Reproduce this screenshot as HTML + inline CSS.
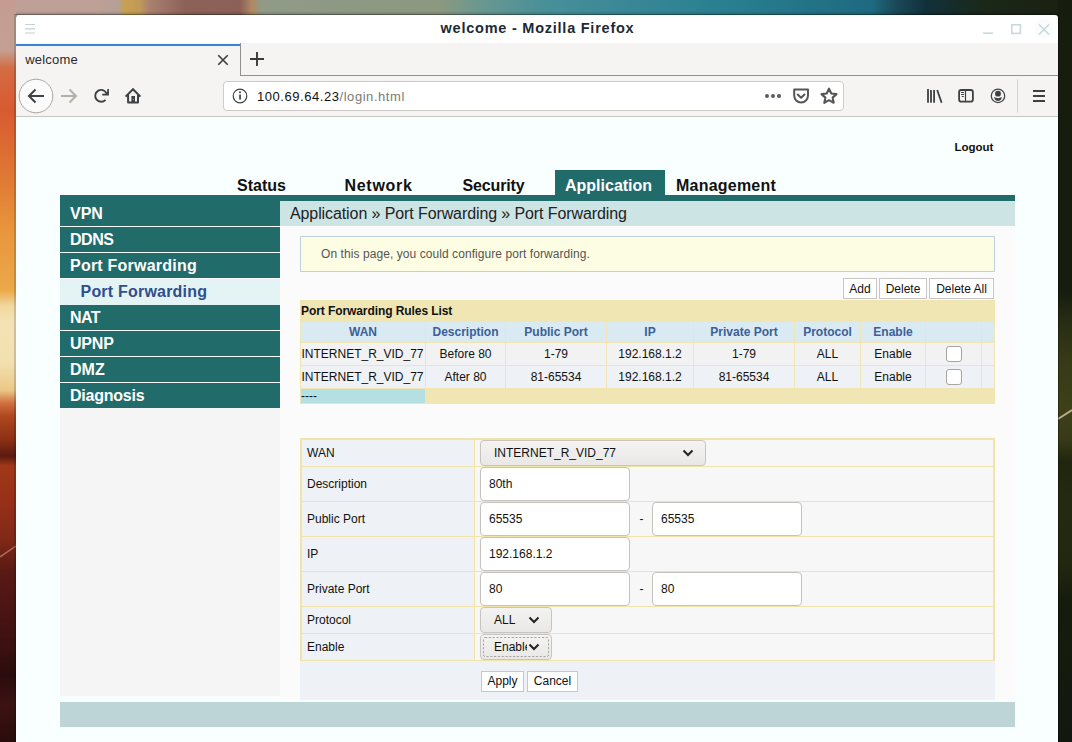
<!DOCTYPE html>
<html><head><meta charset="utf-8">
<style>
*{box-sizing:border-box;margin:0;padding:0}
html,body{width:1072px;height:742px;overflow:hidden}
body{position:relative;font-family:"Liberation Sans",sans-serif;background:#1a2010}
.a{position:absolute}
svg{position:absolute;overflow:visible}
#wall-top{left:0;top:0;width:1072px;height:16px;background:linear-gradient(180deg,rgba(0,0,0,0) 0px,rgba(0,0,0,0) 11px,rgba(0,0,0,0.15) 14px),linear-gradient(90deg,#c0a096 0px,#bea096 95px,#b4a098 118px,#c8a050 125px,#c09858 140px,#a88070 150px,#8c6258 185px,#8a6058 240px,#b08a60 252px,#909a88 262px,#8c9880 440px,#6a9890 480px,#4a9098 540px,#3a8898 620px,#2a8090 720px,#1e6a80 872px,#1a4a5a 895px,#12303c 925px,#1a2818 985px,#1a2010 1072px)}
#wall-left{left:0;top:0;width:16px;height:742px;background:linear-gradient(180deg,#c49c92 0px,#c4a094 50px,#d46c44 68px,#d85a30 110px,#e07a34 180px,#e8983c 235px,#eca848 290px,#f0d8a0 306px,#f4e2b4 322px,#f2e0b0 362px,#ecc888 390px,#d07040 403px,#b04820 416px,#8a3016 440px,#5a1a10 456px,#a03818 466px,#983018 500px,#802818 540px,#5a1a14 570px,#4a1414 610px,#3a1010 650px,#2a0c0c 675px,#3c1212 705px,#2a0c0c 742px)}
#wall-right{left:1058px;top:0;width:14px;height:742px;background:linear-gradient(180deg,#161c0e 0px,#161c0e 290px,#262c12 320px,#363a16 360px,#3e4018 410px,#363a16 440px,#20260e 462px,#242a12 500px,#22280f 560px,#161c0c 600px,#121810 742px)}
#titlebar{left:16px;top:15px;width:1042px;height:28px;background:#fff;border-radius:3px 3px 0 0}
#title{left:0;top:20px;width:1072px;text-align:center;font-weight:bold;font-size:14.5px;letter-spacing:0.76px;color:#1e2a33;line-height:17px;padding-left:3px}
#tabbar{left:16px;top:43px;width:1042px;height:33px;background:#f5f4f2}
#toolbar{left:16px;top:76px;width:1042px;height:41px;background:#f5f4f2;border-bottom:1px solid #c8c5c1}
#content{left:16px;top:117px;width:1042px;height:625px;background:#f9fefe}
.tabtxt{left:25.2px;top:52px;font-size:13px;color:#2a2a2a;line-height:16px;letter-spacing:0.2px}
#url{left:223px;top:81px;width:621px;height:30px;background:#fff;border:1px solid #cfccc8;border-radius:4px}
#urltxt{left:257px;top:89px;font-size:13px;letter-spacing:0.55px;line-height:16px;color:#111}
#urltxt span{color:#7a7a7a}

.t{position:absolute;white-space:nowrap}
#logout{left:954.5px;top:141px;font-weight:bold;font-size:11.5px;color:#111}
.nav{top:176px;font-weight:bold;font-size:16px;color:#111;line-height:20px}
#apptab{left:555px;top:170px;width:110px;height:25px;background:#216b6b}
#tealbar{left:60px;top:195px;width:955px;height:6px;background:#216b6b}
.si{left:60px;width:220px;height:25px;background:#216b6b;color:#fff;font-weight:bold;font-size:16px;line-height:25px;padding-left:10px}
#sub{left:60px;top:279px;width:220px;height:26px;background:#e4f3f3;color:#2f4f8c;font-weight:bold;font-size:16px;line-height:26px;padding-left:20.5px}
#sidegrey{left:60px;top:408px;width:220px;height:288px;background:#f6f5f5}
#crumb{left:280px;top:201px;width:735px;height:25px;background:#cde4e5;font-size:16px;line-height:25px;padding-left:10px;color:#222;letter-spacing:-0.1px}
#main{left:280px;top:226px;width:735px;height:474px;background:#fcfbfb}
#info{left:300px;top:236px;width:695px;height:36px;background:#fdfde3;border:1px solid #bfd2dc}
#infotxt{left:321px;top:247px;font-size:12px;color:#555;line-height:14px;letter-spacing:0.07px}
.btn{height:21px;border:1px solid #cbc6c6;background:#fff;font-size:12px;line-height:20px;text-align:center;color:#111}
#tbl{left:300px;top:300px;width:695px;height:104px;background:#f0e6b4}
.th{top:322px;height:20px;background:#d9eaf3;color:#3c5f98;font-weight:bold;font-size:12px;line-height:20px;text-align:center}
.r1{top:343px;height:22px;background:#f2f2f2;font-size:12px;line-height:22px;text-align:center;color:#111}
.r2{top:366px;height:22px;background:#eef1f5;font-size:12px;line-height:22px;text-align:center;color:#111}
.cb{width:16px;height:16px;border:1px solid #aaa49e;border-radius:3px;background:#fff}
#form{left:300px;top:438px;width:695px;height:223px;background:#f0e4a8}
.lc{left:302px;width:172px;background:#eef1f5;font-size:12px;color:#111;padding-left:5px}
.ic{left:475px;width:518px;background:#f7f7f7}
.inp{width:150px;height:34px;background:#fff;border:1px solid #c6c2be;border-radius:4px;font-size:12px;line-height:32px;padding-left:8px;color:#111}
.sel{height:25px;border:1px solid #c8c4c0;border-radius:4px;background:linear-gradient(#f3f3f2,#e9e8e7);font-size:12px;line-height:23px;padding-left:13px;color:#111;overflow:hidden}
#below{left:300px;top:661px;width:695px;height:39px;background:#eef1f5}
#footer{left:60px;top:702px;width:955px;height:25px;background:#bdd5d6}
</style></head><body>
<div class="a" id="wall-top"></div>
<div class="a" id="wall-left"></div>
<div class="a" id="wall-right"></div>
<svg style="left:0;top:0" width="1072" height="742">
 <path d="M1058 419L1072 410" stroke="#d8c8b0" stroke-width="2" opacity="0.8"/>
 <path d="M0 557L16 546" stroke="#c89080" stroke-width="1.5" opacity="0.7"/>
 <rect x="15" y="14.5" width="1043.5" height="740" fill="none" stroke="#000" stroke-opacity="0.3" stroke-width="1"/>
</svg>
<div class="a" id="titlebar"></div>
<div class="a" id="title">welcome - Mozilla Firefox</div>
<!-- titlebar icons -->
<svg style="left:0;top:0" width="1072" height="50">
 <g stroke="#c4d2d2" stroke-width="1.2">
  <path d="M25 24.5H35M25 28.8H35M25 33H35"/>
 </g>
 <circle cx="1044" cy="29" r="10" fill="#fafbfb"/>
 <g stroke="#c8dadd" stroke-width="1.6" fill="none">
  <path d="M983 33.2H993"/>
  <rect x="1011.8" y="24.8" width="8.6" height="8.6"/>
  <path d="M1039 24.5L1049 34.5M1049 24.5L1039 34.5"/>
 </g>
 
</svg>
<div class="a" id="tabbar"></div>
<div class="a" style="left:16px;top:44px;width:224px;height:2px;background:#3584d8"></div>
<div class="a" style="left:240px;top:43px;width:1px;height:33px;background:#8e9092"></div>
<div class="a" style="left:240px;top:75px;width:818px;height:1px;background:#8e9092"></div>
<div class="a tabtxt">welcome</div>
<svg style="left:0;top:0" width="1072" height="120">
 <g stroke="#3a3a3a" stroke-width="1.6" fill="none">
  <path d="M218.3 55.3L227.7 64.7M227.7 55.3L218.3 64.7"/>
 </g>
 <g stroke="#3a3a3a" stroke-width="1.9" fill="none">
  <path d="M250 59H264M257 52V66"/>
 </g>
</svg>
<div class="a" id="toolbar"></div>
<div class="a" id="url"></div>
<div class="a" id="urltxt">100.69.64.23<span>/login.html</span></div>
<svg style="left:0;top:0" width="1072" height="120">
 <!-- back circle -->
 <circle cx="36" cy="96" r="16.8" fill="#fbfbfb" stroke="#a9a7a4" stroke-width="1"/>
 <g stroke="#3e4143" stroke-width="2" fill="none" stroke-linecap="butt">
  <path d="M29 96H44M35.5 89.5L29 96L35.5 102.5"/>
 </g>
 <g stroke="#b3b0ac" stroke-width="2" fill="none">
  <path d="M61 96H76M69.5 89.5L76 96L69.5 102.5"/>
 </g>
 <!-- reload -->
 <g stroke="#3e4143" stroke-width="2" fill="none">
  <path d="M106.5 93.4A5.9 5.9 0 1 0 105.5 99.8" stroke-width="1.9"/>
  <path d="M102.2 94.7H108.1V89" stroke-width="1.7"/>
  <path d="M104.8 94.5L108 91.2V94.5Z" fill="#3e4143" stroke="none"/>
 </g>
 <!-- home -->
 <g stroke="#3e4143" stroke-width="2" fill="none" stroke-linejoin="miter">
  <path d="M125.6 96.6L133 89.2L140.4 96.6"/>
  <path d="M128.1 94.8V102.6H138V94.8" stroke-linejoin="round"/>
 </g>
 <rect x="131.4" y="96" width="3.6" height="6.5" fill="#3e4143"/>
 <rect x="132.9" y="98.9" width="0.9" height="0.9" fill="#ccc"/>
 <!-- info -->
 <circle cx="240" cy="96" r="6.8" fill="none" stroke="#3e4143" stroke-width="1.2"/>
 <rect x="239.2" y="94.5" width="1.7" height="5" fill="#3e4143"/>
 <circle cx="240" cy="92.3" r="1" fill="#3e4143"/>
 <!-- dots -->
 <g fill="#5a5a5a"><circle cx="767" cy="96" r="2"/><circle cx="773" cy="96" r="2"/><circle cx="779" cy="96" r="2"/></g>
 <!-- pocket -->
 <g stroke="#555" stroke-width="2" fill="none" stroke-linejoin="round">
  <path d="M794.2 89.6H808V95.6A6.9 6.9 0 0 1 794.2 95.6Z"/>
  <path d="M797.2 94L801.1 97.8L805 94"/>
 </g>
 <!-- star -->
 <path d="M829 88.6L831.3 93.5L836.5 94.1L832.6 97.6L833.7 102.8L829 100.2L824.3 102.8L825.4 97.6L821.5 94.1L826.7 93.5Z" fill="none" stroke="#555" stroke-width="2.1" stroke-linejoin="round"/>
 <!-- library -->
 <g fill="#3e4143">
  <rect x="927.1" y="89" width="1.8" height="13.7"/>
  <rect x="930.1" y="90" width="1.8" height="12.7"/>
  <rect x="933.2" y="90" width="1.8" height="12.7"/>
 </g>
 <path d="M937.2 90L941.6 102.7" stroke="#3e4143" stroke-width="1.8"/>
 <!-- sidebar -->
 <rect x="959.1" y="90" width="13.8" height="11.7" rx="2.2" fill="none" stroke="#3e4143" stroke-width="1.8"/>
 <path d="M965.5 90V102" stroke="#3e4143" stroke-width="1.2"/>
 <g fill="#3e4143"><rect x="961.1" y="92" width="2.9" height="1"/><rect x="961.1" y="94" width="2.9" height="1"/><rect x="961.8" y="96" width="2" height="1"/></g>
 <!-- account -->
 <circle cx="998" cy="95.9" r="6.7" fill="none" stroke="#3e4143" stroke-width="1.25"/>
 <circle cx="998" cy="93.7" r="2.9" fill="#3e4143"/>
 <path d="M994.1 97Q998 99.3 1001.9 97Q1001.2 100.9 998 100.9Q994.8 100.9 994.1 97Z" fill="#3e4143"/>
 <!-- separator -->
 <path d="M1017.5 79.5V112.5" stroke="#d4d2cf" stroke-width="1"/>
 <!-- hamburger -->
 <g stroke="#3e4143" stroke-width="2"><path d="M1033 91H1045M1033 96H1045M1033 101H1045"/></g>
</svg>
<div class="a" id="content"></div>

<div class="t" id="logout">Logout</div>
<div class="a" id="apptab"></div>
<div class="t nav" style="left:237px">Status</div>
<div class="t nav" style="left:344.5px;letter-spacing:0.7px">Network</div>
<div class="t nav" style="left:462.5px;letter-spacing:-0.15px">Security</div>
<div class="t nav" style="left:565px;color:#fff">Application</div>
<div class="t nav" style="left:676px;letter-spacing:0.22px">Management</div>
<div class="a" id="tealbar"></div>
<div class="t si" style="top:201px">VPN</div>
<div class="t si" style="top:227px;letter-spacing:-0.47px">DDNS</div>
<div class="t si" style="top:253px;letter-spacing:0.23px">Port Forwarding</div>
<div class="t" id="sub" style="letter-spacing:0.21px">Port Forwarding</div>
<div class="t si" style="top:305px;letter-spacing:-0.6px">NAT</div>
<div class="t si" style="top:331px;letter-spacing:-0.2px">UPNP</div>
<div class="t si" style="top:357px">DMZ</div>
<div class="t si" style="top:383px;letter-spacing:-0.24px">Diagnosis</div>
<div class="a" id="sidegrey"></div>
<div class="t" id="crumb">Application » Port Forwarding » Port Forwarding</div>
<div class="a" id="main"></div>
<div class="a" id="info"></div>
<div class="t" id="infotxt">On this page, you could configure port forwarding.</div>
<div class="t btn" style="left:843px;top:278px;width:34px">Add</div>
<div class="t btn" style="left:879px;top:278px;width:48px">Delete</div>
<div class="t btn" style="left:929px;top:278px;width:65px">Delete All</div>
<div class="a" id="tbl"></div>
<div class="t" style="left:301px;top:304px;font-weight:bold;font-size:12px;line-height:14px;color:#111;letter-spacing:-0.08px">Port Forwarding Rules List</div>
<div class="t th" style="left:301px;width:124px">WAN</div>
<div class="t th" style="left:426px;width:79px">Description</div>
<div class="t th" style="left:506px;width:100px">Public Port</div>
<div class="t th" style="left:607px;width:86px">IP</div>
<div class="t th" style="left:694px;width:100px">Private Port</div>
<div class="t th" style="left:795px;width:65px">Protocol</div>
<div class="t th" style="left:861px;width:64px">Enable</div>
<div class="t th" style="left:926px;width:55px"></div>
<div class="t th" style="left:982px;width:12px"></div>
<div class="t r1" style="left:301px;width:124px;text-align:left;padding-left:0.5px">INTERNET_R_VID_77</div>
<div class="t r1" style="left:426px;width:79px">Before 80</div>
<div class="t r1" style="left:506px;width:100px">1-79</div>
<div class="t r1" style="left:607px;width:86px">192.168.1.2</div>
<div class="t r1" style="left:694px;width:100px">1-79</div>
<div class="t r1" style="left:795px;width:65px">ALL</div>
<div class="t r1" style="left:861px;width:64px">Enable</div>
<div class="t r1" style="left:926px;width:55px"></div>
<div class="t r1" style="left:982px;width:12px"></div>
<div class="t r2" style="left:301px;width:124px;text-align:left;padding-left:0.5px">INTERNET_R_VID_77</div>
<div class="t r2" style="left:426px;width:79px">After 80</div>
<div class="t r2" style="left:506px;width:100px">81-65534</div>
<div class="t r2" style="left:607px;width:86px">192.168.1.2</div>
<div class="t r2" style="left:694px;width:100px">81-65534</div>
<div class="t r2" style="left:795px;width:65px">ALL</div>
<div class="t r2" style="left:861px;width:64px">Enable</div>
<div class="t r2" style="left:926px;width:55px"></div>
<div class="t r2" style="left:982px;width:12px"></div>
<div class="a cb" style="left:946px;top:346px"></div>
<div class="a cb" style="left:946px;top:369px"></div>
<div class="t" style="left:301px;top:389px;width:124px;height:14px;background:#b5e0e2;font-size:12px;line-height:15px;color:#111">----</div>
<div class="a" id="form"></div>
<div class="t lc" style="top:440px;height:26px;line-height:26px">WAN</div>
<div class="a ic" style="top:440px;height:26px"></div>
<div class="t lc" style="top:467px;height:34px;line-height:34px">Description</div>
<div class="a ic" style="top:467px;height:34px"></div>
<div class="t lc" style="top:502px;height:34px;line-height:34px">Public Port</div>
<div class="a ic" style="top:502px;height:34px"></div>
<div class="t lc" style="top:537px;height:34px;line-height:34px">IP</div>
<div class="a ic" style="top:537px;height:34px"></div>
<div class="t lc" style="top:572px;height:34px;line-height:34px">Private Port</div>
<div class="a ic" style="top:572px;height:34px"></div>
<div class="t lc" style="top:607px;height:26px;line-height:26px">Protocol</div>
<div class="a ic" style="top:607px;height:26px"></div>
<div class="t lc" style="top:634px;height:26px;line-height:26px">Enable</div>
<div class="a ic" style="top:634px;height:26px"></div>
<div class="t sel" style="left:480px;top:440px;width:226px;height:26px;line-height:24px">INTERNET_R_VID_77</div>
<div class="t inp" style="left:480px;top:467px">80th</div>
<div class="t inp" style="left:480px;top:502px">65535</div>
<div class="t" style="left:639.5px;top:512px;font-size:12px;line-height:14px;color:#111">-</div>
<div class="t inp" style="left:652px;top:502px">65535</div>
<div class="t inp" style="left:480px;top:537px">192.168.1.2</div>
<div class="t inp" style="left:480px;top:572px">80</div>
<div class="t" style="left:639.5px;top:582px;font-size:12px;line-height:14px;color:#111">-</div>
<div class="t inp" style="left:652px;top:572px">80</div>
<div class="t sel" style="left:480px;top:607px;width:72px;height:26px;line-height:24px">ALL</div>
<div class="t sel" style="left:480px;top:634px;width:72px;height:26px;line-height:24px"><span style="display:inline-block;width:33px;overflow:hidden;vertical-align:top">Enable</span></div>
<svg style="left:0;top:0" width="1072" height="742"><rect x="483.5" y="637.5" width="65" height="19" rx="1.5" fill="none" stroke="#a4a4a4" stroke-width="1" stroke-dasharray="2.2 1.6"/></svg>
<svg style="left:0;top:0" width="1072" height="742">
 <g stroke="#222" stroke-width="2" fill="none">
  <path d="M683.5 450.5L688 455L692.5 450.5"/>
  <path d="M529.5 617.5L534 622L538.5 617.5"/>
  <path d="M529.5 644.5L534 649L538.5 644.5"/>
 </g>
</svg>
<div class="a" id="below"></div>
<div class="t btn" style="left:481px;top:671px;width:43px;line-height:19px">Apply</div>
<div class="t btn" style="left:527px;top:671px;width:51px;line-height:19px">Cancel</div>
<div class="a" id="footer"></div>
</body></html>
